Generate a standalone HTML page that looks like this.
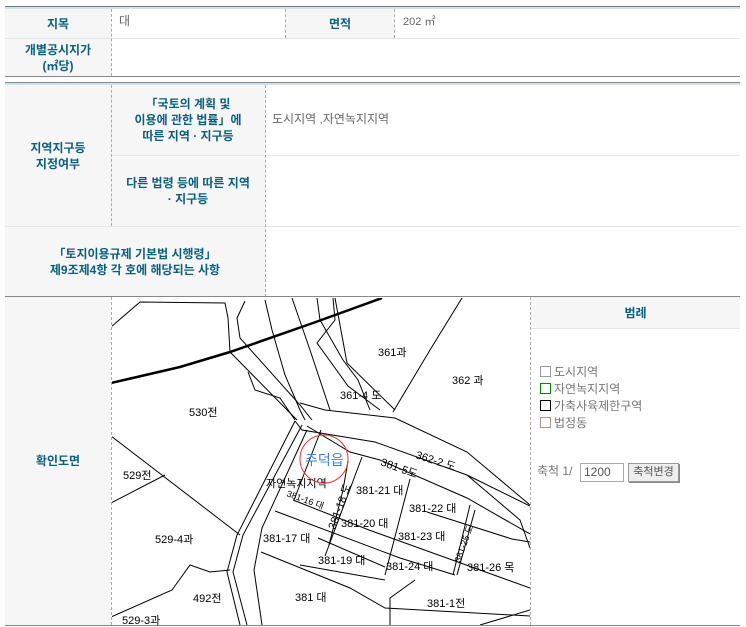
<!DOCTYPE html>
<html><head><meta charset="utf-8"><style>
body{margin:0;width:746px;height:627px;background:#fff;position:relative;overflow:hidden;font-family:"Liberation Sans","Noto Sans CJK KR",sans-serif;font-size:12px}
.a{position:absolute;box-sizing:border-box}
.lab{background:#f6f6f6;color:#0b5f7d;font-weight:bold;display:flex;align-items:center;justify-content:center;text-align:center;line-height:16px}
.hl{position:absolute;height:1px;background:#e6e6e6}
.dv{position:absolute;width:0;border-left:1px dashed #aaa}
.val{color:#666;font-size:12px}
</style></head><body>
<!-- top borders -->
<div class="a" style="left:5px;top:6px;width:735px;height:1px;background:#777"></div>
<div class="a" style="left:5px;top:7px;width:735px;height:2px;background:#cfe3ea"></div>
<div class="a lab" style="left:5px;top:9px;width:106px;height:29px">지목</div>
<div class="a lab" style="left:285px;top:9px;width:110px;height:29px">면적</div>
<div class="a val" style="left:119px;top:12px">대</div>
<div class="a val" style="left:403px;top:13px;font-size:11px">202 ㎡</div>
<div class="hl" style="left:5px;top:38px;width:735px"></div>
<div class="a lab" style="left:5px;top:39px;width:106px;height:37px">개별공시지가<br>(㎡당)</div>
<div class="dv" style="left:111px;top:9px;height:67px"></div>
<div class="dv" style="left:285px;top:9px;height:29px"></div>
<div class="dv" style="left:394px;top:9px;height:29px"></div>
<div class="a" style="left:5px;top:76px;width:735px;height:1px;background:#888"></div>
<!-- section 2 -->
<div class="a" style="left:5px;top:82px;width:735px;height:1px;background:#888"></div>
<div class="a" style="left:5px;top:83px;width:735px;height:2px;background:#cfe3ea"></div>
<div class="a lab" style="left:5px;top:85px;width:106px;height:141px">지역지구등<br>지정여부</div>
<div class="a lab" style="left:111px;top:85px;width:154px;height:70px">「국토의 계획 및<br>이용에 관한 법률」에<br>따른 지역 · 지구등</div>
<div class="hl" style="left:111px;top:155px;width:629px"></div>
<div class="a lab" style="left:111px;top:156px;width:154px;height:70px">다른 법령 등에 따른 지역<br>· 지구등</div>
<div class="a val" style="left:272px;top:110px">도시지역 ,자연녹지지역</div>
<div class="hl" style="left:5px;top:226px;width:735px"></div>
<div class="a lab" style="left:5px;top:227px;width:260px;height:70px">「토지이용규제 기본법 시행령」<br>제9조제4항 각 호에 해당되는 사항</div>
<div class="dv" style="left:111px;top:85px;height:141px"></div>
<div class="dv" style="left:265px;top:85px;height:212px"></div>
<div class="a" style="left:5px;top:296px;width:735px;height:1px;background:#888"></div>
<!-- map row -->
<div class="a lab" style="left:5px;top:297px;width:106px;height:328px">확인도면</div>
<div class="dv" style="left:111px;top:297px;height:328px"></div>
<div class="dv" style="left:530px;top:297px;height:328px"></div>
<div class="a lab" style="left:531px;top:297px;width:209px;height:31px">범례</div>
<div class="hl" style="left:531px;top:328px;width:209px"></div>
<div class="a" style="left:540px;top:364px;color:#777;font-size:12px;line-height:17px">
<div><span style="display:inline-block;width:9px;height:9px;border:1px solid #999;vertical-align:-1px;margin-right:3px"></span>도시지역</div>
<div><span style="display:inline-block;width:9px;height:9px;border:1px solid #080;vertical-align:-1px;margin-right:3px"></span>자연녹지지역</div>
<div><span style="display:inline-block;width:9px;height:9px;border:1px solid #000;vertical-align:-1px;margin-right:3px"></span>가축사육제한구역</div>
<div><span style="display:inline-block;width:9px;height:9px;border:1px solid #a98;vertical-align:-1px;margin-right:3px"></span>법정동</div>
</div>
<div class="a" style="left:537px;top:462px;color:#777">축척 1/</div>
<div class="a" style="left:580px;top:463px;width:44px;height:19px;border:1px solid #aaa;color:#555;padding:1px 3px">1200</div>
<div class="a" style="left:628px;top:463px;width:51px;height:19px;border:1px solid #999;background:#eee;color:#555;font-size:11px;text-align:center;line-height:17px;box-shadow:1px 1px 0 #888">축척변경</div>
<div class="a" style="left:5px;top:625px;width:735px;height:1px;background:#888"></div>
<svg class="a" style="left:0;top:0" width="746" height="627" viewBox="0 0 746 627">
<defs><clipPath id="c"><rect x="112" y="298" width="418" height="327"/></clipPath></defs>
<g clip-path="url(#c)" fill="none" stroke="#000" stroke-width="1">
<polyline stroke-width="2.5" points="111,383 180,367 230,352 313,323 382,298"/>
<polyline points="111,327 140,302 225,303 228,318 230,352 297,420"/>
<polyline points="245,301 237,318 240,338 300,405 312,420"/>
<polyline points="248,372 255,390 280,398 295,420"/>
<polyline points="265,300 272,330 285,375 300,410 305,420"/>
<polyline points="292,298 310,350 330,410"/>
<polyline points="317,298 320,320 343,360 358,380 370,410"/>
<polyline points="333,298 335,320 317,343 348,386 380,410"/>
<polyline points="335,298 347,363 395,410"/>
<polyline points="462,298 430,350 393,412"/>
<polyline points="295,421 302,430 375,442 467,475 530,506"/>
<polyline points="300,403 325,410 395,418 467,452 530,505"/>
<polyline points="307,426 350,452 380,460 467,498 530,534"/>
<polyline points="295,421 237,535 227,572 240,625"/>
<polyline points="302,425 243,535 233,572 247,625"/>
<polyline points="307,430 262,528 254,570 262,625"/>
<polyline points="321,430 294,500"/>
<polyline points="362,457 325,556"/>
<polyline points="348,461 343,490 329,545"/>
<polyline points="410,479 385,575"/>
<polyline points="470,505 453,575"/>
<polyline points="475,510 457,575"/>
<polyline points="293,500 369,530 530,588"/>
<polyline points="275,511 400,558 455,575"/>
<polyline points="261,552 350,588 385,608 530,616"/>
<polyline points="318,538 385,567"/>
<polyline points="300,565 385,580"/>
<polyline points="427,512 512,539 530,542"/>
<polyline points="467,475 520,520 530,548"/>
<polyline points="111,436 240,535"/>
<polyline points="111,503 165,475"/>
<polyline points="111,617 172,590 190,565 210,572 230,570"/>
<polyline points="390,625 390,598 415,580"/>
<polyline points="480,625 530,610"/>
</g>
<g font-family="Liberation Sans,Noto Sans CJK KR,sans-serif" font-size="11" fill="#000">
<text x="378" y="356">361과</text><text x="452" y="384">362 과</text>
<text x="340" y="399">361-4 도</text><text x="189" y="416">530전</text>
<text x="123" y="479">529전</text><text x="155" y="543">529-4과</text>
<text x="193" y="602">492전</text><text x="122" y="624">529-3과</text>
<text x="356" y="494">381-21 대</text><text x="409" y="512">381-22 대</text>
<text x="341" y="527">381-20 대</text><text x="398" y="540">381-23 대</text>
<text x="263" y="542">381-17 대</text><text x="318" y="564">381-19 대</text>
<text x="386" y="570">381-24 대</text><text x="467" y="571">381-26 목</text>
<text x="295" y="601">381 대</text><text x="427" y="607">381-1전</text>
<text x="266" y="487">자연녹지지역</text>
<text x="380" y="465" transform="rotate(20 380 465)">381-5도</text>
<text x="415" y="458" transform="rotate(18 415 458)">362-2 도</text>
<text x="286" y="496" font-size="9" transform="rotate(20 286 496)">381-16 대</text>
<text x="335" y="530" transform="rotate(-70 335 530)">381-18 도</text>
<text x="460" y="563" font-size="9" transform="rotate(-70 460 563)">381-25 도</text>
</g>
<circle cx="324" cy="459" r="24" fill="none" stroke="#e33" stroke-width="1"/>
<text x="305" y="465" font-family="Liberation Sans,Noto Sans CJK KR,sans-serif" font-size="14" fill="#3a7fd6">주덕읍</text>
</svg>
</body></html>
